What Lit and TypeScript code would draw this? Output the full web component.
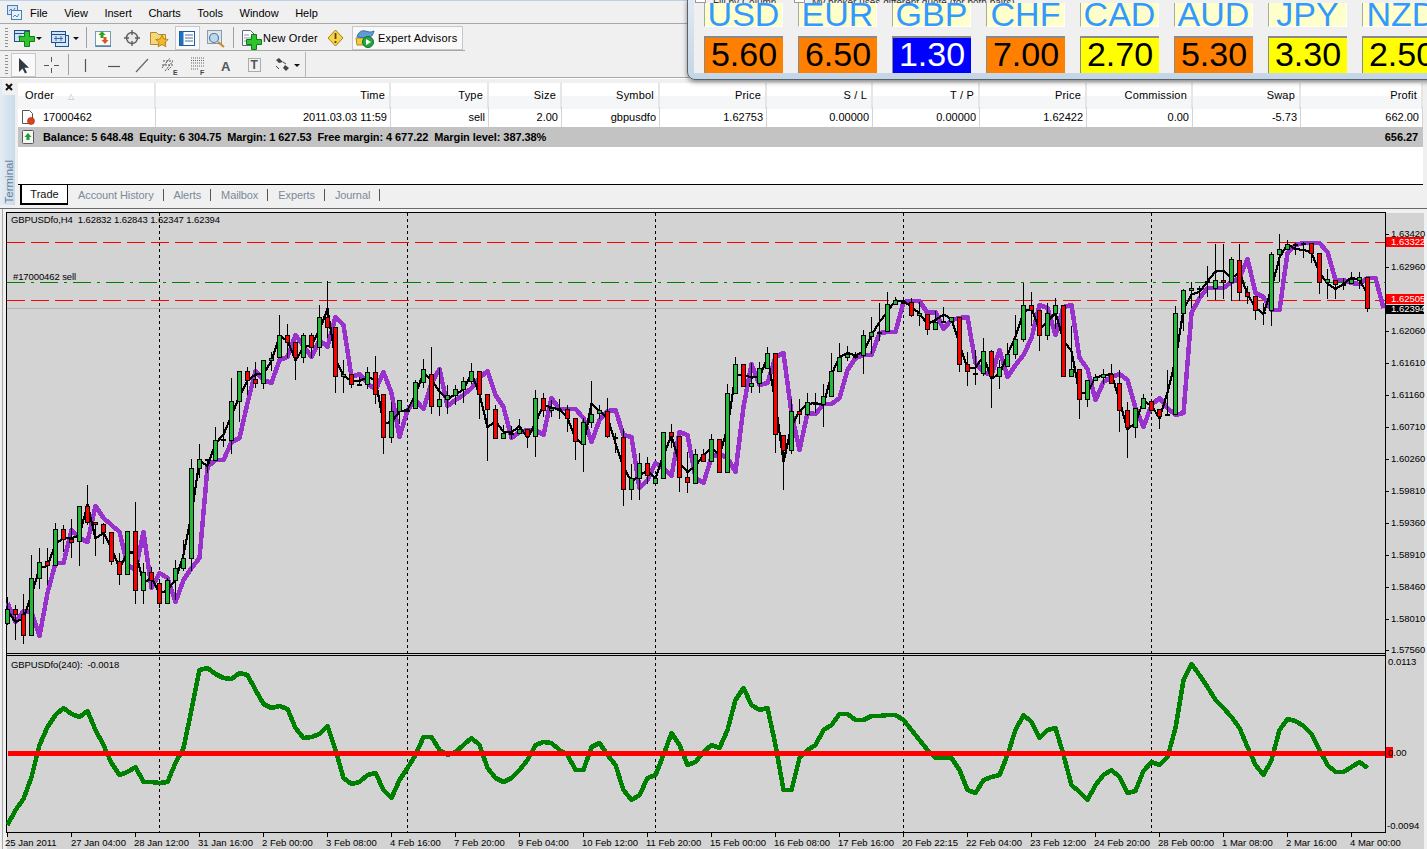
import { LitElement, css, html, svg } from 'lit'
import { customElement } from 'lit/decorators.js'

// [high, body top, body bottom, low, kind] in page pixels, one bar every 8px from x=7
type Bar = [number, number, number, number, 'g' | 'r' | 'd']
const BARS: Bar[] = [
  [597,609,623,624,'g'],[605,609,614,639,'r'],[594,614,635,643,'r'],[555,578,635,635,'g'],[548,562,578,588,'g'],
  [548,561,565,584,'r'],[523,529,565,565,'g'],[525,529,539,551,'r'],[519,539,542,557,'r'],[506,506,541,565,'g'],
  [485,506,522,524,'r'],[522,522,524,555,'r'],[523,524,532,543,'r'],[532,532,561,564,'r'],[553,561,574,584,'r'],
  [531,531,574,574,'g'],[502,531,590,603,'r'],[563,572,590,603,'g'],[567,572,580,588,'r'],[579,583,603,607,'r'],
  [578,580,603,603,'g'],[560,568,580,599,'g'],[540,558,568,570,'g'],[459,468,558,570,'g'],[444,459,468,477,'g'],
  [459,459,459,473,'d'],[427,440,460,460,'g'],[422,439,439,447,'d'],[378,401,440,453,'g'],[371,371,401,421,'g'],
  [367,371,380,394,'r'],[362,379,383,387,'r'],[360,360,383,388,'g'],[352,358,360,370,'g'],[315,335,357,357,'g'],
  [324,335,342,357,'r'],[342,342,357,379,'r'],[333,335,357,362,'g'],[333,335,347,357,'r'],[305,317,347,355,'g'],
  [281,317,327,337,'r'],[327,327,376,392,'r'],[360,374,376,392,'g'],[374,374,384,387,'r'],[377,384,384,385,'d'],
  [367,372,384,388,'g'],[356,372,394,403,'r'],[394,394,437,453,'r'],[402,411,437,442,'g'],[400,400,411,423,'g'],
  [408,410,410,412,'d'],[380,382,408,408,'g'],[359,369,382,387,'g'],[347,374,406,413,'r'],[368,399,406,415,'g'],
  [385,395,399,413,'g'],[385,389,395,404,'g'],[377,381,389,402,'g'],[363,371,381,383,'g'],[371,371,394,418,'r'],
  [394,394,409,460,'r'],[405,409,438,438,'r'],[425,433,438,438,'g'],[426,433,433,439,'d'],[419,429,433,433,'g'],
  [429,429,436,447,'r'],[390,398,436,456,'g'],[393,398,410,416,'r'],[400,408,410,416,'g'],[399,409,409,419,'d'],
  [405,409,418,431,'r'],[418,418,441,459,'r'],[418,422,444,471,'g'],[381,414,422,427,'g'],[405,410,413,418,'g'],
  [398,411,436,437,'r'],[433,437,437,453,'d'],[429,437,489,505,'r'],[464,478,489,499,'g'],[453,463,478,499,'g'],
  [457,463,475,483,'r'],[475,478,483,483,'g'],[432,432,478,478,'g'],[424,432,436,447,'r'],[436,436,477,491,'r'],
  [452,477,482,492,'r'],[449,454,483,483,'g'],[449,454,461,461,'r'],[434,439,461,461,'g'],[439,439,472,472,'r'],
  [384,393,472,472,'g'],[357,364,393,393,'g'],[364,364,386,386,'r'],[363,383,386,392,'g'],[362,368,383,392,'g'],
  [347,353,368,368,'g'],[353,353,434,452,'r'],[435,435,450,489,'r'],[399,411,450,453,'g'],[399,411,414,423,'r'],
  [393,402,414,415,'g'],[393,403,403,413,'d'],[384,396,404,426,'g'],[353,371,396,396,'g'],[343,357,371,371,'g'],
  [346,354,357,360,'g'],[352,356,356,359,'d'],[330,335,355,373,'g'],[317,332,336,353,'g'],[303,332,332,341,'d'],
  [292,304,331,331,'g'],[297,300,304,304,'g'],[298,302,302,304,'d'],[298,302,315,316,'r'],[302,313,315,325,'g'],
  [314,314,329,334,'r'],[311,322,329,329,'g'],[307,321,321,322,'d'],[317,317,321,321,'g'],[317,317,364,371,'r'],
  [352,364,371,385,'r'],[350,373,373,385,'d'],[338,351,373,375,'g'],[350,351,376,407,'r'],[360,367,376,388,'g'],
  [343,354,366,366,'g'],[315,339,354,358,'g'],[283,305,339,341,'g'],[292,305,310,325,'r'],[310,310,335,350,'r'],
  [303,313,335,339,'g'],[298,305,313,328,'g'],[305,305,376,376,'r'],[326,369,376,376,'g'],[369,369,399,418,'r'],
  [380,380,399,406,'g'],[374,377,380,380,'g'],[369,374,377,383,'g'],[364,374,383,383,'r'],[370,383,410,431,'r'],
  [402,410,427,457,'r'],[408,408,427,437,'g'],[394,398,408,408,'g'],[401,401,410,410,'r'],[409,409,416,428,'r'],
  [370,414,414,415,'d'],[306,313,414,414,'g'],[289,290,313,330,'g'],[282,288,290,307,'g'],[286,288,288,298,'d'],
  [266,281,281,297,'d'],[244,280,288,299,'g'],[244,280,282,298,'r'],[257,259,282,300,'g'],[244,260,292,300,'r'],
  [286,292,296,303,'r'],[296,296,310,319,'r'],[303,312,312,325,'d'],[252,254,310,325,'g'],[234,249,254,281,'g'],
  [240,244,249,249,'g'],[243,244,244,255,'d'],[242,243,243,258,'d'],[243,243,253,262,'r'],[253,253,282,293,'r'],
  [269,279,282,298,'g'],[280,280,284,298,'r'],[278,284,284,290,'d'],[272,279,283,283,'g'],[272,277,280,288,'g'],
  [277,277,308,311,'r'],
]

const PURPLE = [603,622,611,612,636,593,563,563,530,538,542,506,518,525,532,565,570,532,588,573,578,602,580,568,558,467,460,460,442,438,403,371,380,383,360,357,335,346,357,340,347,317,325,377,374,383,390,372,393,437,410,400,409,383,369,406,400,395,388,378,371,395,407,438,432,430,430,435,398,409,409,409,418,442,420,411,410,435,437,488,480,463,468,476,432,435,478,483,457,454,458,472,407,364,385,383,357,353,413,450,413,414,404,404,398,370,358,355,355,333,332,332,302,301,301,313,312,329,320,318,317,363,372,375,350,377,365,355,338,305,308,335,307,305,358,369,400,382,377,374,380,408,427,405,398,408,415,413,313,298,288,288,288,282,278,259,293,297,310,310,253,245,243,243,243,252,280,280,283,284,278,278,308]

const OSC = [825,810,799,777,745,727,715,708,714,717,711,730,745,763,775,772,767,782,782,783,782,763,748,710,670,668,674,678,679,673,675,690,704,708,706,709,728,738,737,734,726,750,778,784,782,775,773,790,798,780,
  768,755,737,737,750,755,752,745,738,745,768,778,782,778,770,760,745,742,743,750,755,770,770,747,743,755,765,790,800,795,778,775,755,733,745,765,762,752,745,748,730,700,688,705,710,708,745,790,790,758,750,745,730,725,714,714,720,720,716,716,715,715,720,730,740,750,758,758,758,770,790,793,780,777,775,755,730,715,722,738,730,728,755,785,792,800,785,775,770,777,793,791,771,762,765,757,728,680,664,675,687,700,708,717,728,747,765,775,760,730,719,721,726,734,750,765,772,772,767,762,768]

const barX = (i: number) => 7 + 8 * i
const line = (ys: number[]) => ys.map((y, i) => `${barX(i) + 0.5},${y}`).join(' ')

const PRICES: [string, number][] = [['1.63420',234],['1.62960',267],['1.62060',331],['1.61610',363],['1.61160',395],['1.60710',427],['1.60260',459],['1.59810',491],['1.59360',523],['1.58910',555],['1.58460',587],['1.58010',619],['1.57560',650]]

const TIMES = ['25 Jan 2011','27 Jan 04:00','28 Jan 12:00','31 Jan 16:00','2 Feb 00:00','3 Feb 08:00','4 Feb 16:00','7 Feb 20:00','9 Feb 04:00','10 Feb 12:00','11 Feb 20:00','15 Feb 00:00','16 Feb 08:00','17 Feb 16:00','20 Feb 22:15','22 Feb 04:00','23 Feb 12:00','24 Feb 20:00','28 Feb 00:00','1 Mar 08:00','2 Mar 16:00','4 Mar 00:00']

const CURRENCIES = [
  { name: 'USD', value: '5.60', tone: 'orange' },
  { name: 'EUR', value: '6.50', tone: 'orange' },
  { name: 'GBP', value: '1.30', tone: 'blue' },
  { name: 'CHF', value: '7.00', tone: 'orange' },
  { name: 'CAD', value: '2.70', tone: 'yellow' },
  { name: 'AUD', value: '5.30', tone: 'orange' },
  { name: 'JPY', value: '3.30', tone: 'yellow' },
  { name: 'NZD', value: '2.50', tone: 'yellow' },
]

const COLS: [string, string][] = [['Time','2011.03.03 11:59'],['Type','sell'],['Size','2.00'],['Symbol','gbpusdfo'],['Price','1.62753'],['S / L','0.00000'],['T / P','0.00000'],['Price','1.62422'],['Commission','0.00'],['Swap','-5.73'],['Profit','662.00']]

// icon cell drawn in page coordinates, so each glyph can be read off the screenshot
const cell = (x: number, w: number, y: number, h: number, body: unknown) =>
  html`<svg class="cell" width=${w} height=${h} viewBox="${x} ${y} ${w} ${h}">${body}</svg>`

const plus = (cx: number, cy: number) => svg`<path d="M${cx - 2.5} ${cy - 7.5}h5v5h5v5h-5v5h-5v-5h-5v-5h5z" fill="#2fc42f" stroke="#0f7a1a"/>`
const drop = (x: number, y: number) => svg`<path d="M${x} ${y}h6l-3 3z" fill="#111"/>`

const ROW1 = html`
  <span class="grip"></span>
  ${cell(10, 34, 26, 24, svg`<rect x="14.5" y="30.5" width="15" height="11" fill="#cfe2f6" stroke="#1d4f91"/><path d="M14 33.5h16" stroke="#1d4f91"/><path d="M18 37h7M20 35v4" stroke="#4a77b0"/>${plus(27, 39)}${drop(36, 37)}`)}
  ${cell(44, 38, 26, 24, svg`<rect x="55.5" y="35.5" width="13" height="11" fill="#dbe7f4" stroke="#23558f"/><rect x="51.5" y="31.5" width="14" height="11" fill="#cfe2f6" stroke="#1d4f91"/><path d="M51 34.5h15" stroke="#1d4f91"/><path d="M54 38.5h9M56 36v5M61 36v5" stroke="#3a6aa5"/>${drop(73, 37)}`)}
  <span class="sep"></span>
  ${cell(90, 27, 26, 24, svg`<rect x="95.5" y="31.5" width="15" height="15" fill="#fdfdf0" stroke="#6f9cc0"/><path d="M96 46h15" stroke="#4f7fa5" stroke-width="1.5"/><path d="M102 31l-3.5 4h2v3h3v-3h2z" fill="#26a626"/><path d="M105 44l3.500-4h-2v-3h-3v3h-2z" fill="#e2502a"/>`)}
  ${cell(117, 28, 26, 24, svg`<circle cx="132" cy="38" r="5.500" fill="#e9e9e9" stroke="#5e5e5e" stroke-width="1.400"/><path d="M132 30v5M132 41v5M124 38h5M135 38h5" stroke="#5e5e5e" stroke-width="1.400"/>`)}
  ${cell(145, 27, 26, 24, svg`<path d="M150.500 32.500h6l2 2h7v10h-15z" fill="#f5d77c" stroke="#b08a2a"/><path d="M162 35l1.900 4 4.300.500-3.200 3 .9 4.300-3.900-2.200-3.900 2.200.9-4.300-3.200-3 4.300-.5z" fill="#f2b92b" stroke="#a67a12" stroke-width=".8"/>`)}
  <span class="pressed small">${cell(175, 25, 26, 24, svg`<rect x="179.500" y="31.500" width="15" height="14" fill="#fff" stroke="#1e5aa5"/><rect x="180" y="32" width="3.500" height="13" fill="#1f6fc4"/><path d="M185 35h8M185 38h8M185 41h8" stroke="#4a6e9a"/>`)}</span>
  ${cell(201, 28, 26, 24, svg`<rect x="207.500" y="30.500" width="14" height="13" fill="#dbe5ee" stroke="#8b9aa8"/><circle cx="214" cy="38" r="4.500" fill="#bcd8f0" stroke="#5a7894" stroke-width="1.200"/><path d="M218 42l6 5" stroke="#c98a2a" stroke-width="2.200"/>`)}
  <span class="sep"></span>
  ${cell(237, 26, 26, 24, svg`<path d="M242.500 30.500h8l4 4v11h-12z" fill="#fff" stroke="#5c6b7a"/><path d="M244 35h5M244 38h8M244 41h6" stroke="#8a97a5"/>${plus(254, 42)}`)}
  <span class="label order">New Order</span>
  ${cell(323, 27, 26, 24, svg`<path d="M336.500 30l7.500 8-7.500 8-7.500-8z" fill="#f7d24a" stroke="#a88414"/><path d="M336.500 33v6" stroke="#5a4708" stroke-width="1.800"/><path d="M336.500 41v2" stroke="#5a4708" stroke-width="1.800"/>`)}
  <span class="pressed ea">
    ${cell(353, 26, 26, 24, svg`<path d="M357 38h14l1 7h-14z" fill="#f2cc3e" stroke="#a98a1e"/><path d="M358 37c1-5 5-7 8-6 3 .5 5 2 9 0-1 4-3 7-7 7z" fill="#5f9bd6" stroke="#336ea8"/><circle cx="369" cy="42" r="5.500" fill="#25a83a" stroke="#14712a"/><path d="M367 39l5 3-5 3z" fill="#fff"/>`)}
    <span class="label">Expert Advisors</span>
  </span>
`

const ROW2 = html`
  <span class="grip"></span>
  <span class="pressed arrow">${cell(11, 25, 53, 23, svg`<path d="M19 58v14l3.500-3.500 2.500 5 2-1-2.500-4.800h4.500z" fill="#2f3a44"/>`)}</span>
  ${cell(36, 28, 53, 23, svg`<path d="M51.500 57v5M51.500 68v5M44 65.500h5M54 65.500h5" stroke="#555"/>`)}
  <span class="sep"></span>
  ${cell(72, 28, 53, 23, svg`<path d="M85.500 59v13" stroke="#555" stroke-width="1.200"/>`)}
  ${cell(100, 28, 53, 23, svg`<path d="M108 66.500h12" stroke="#555" stroke-width="1.200"/>`)}
  ${cell(128, 28, 53, 23, svg`<path d="M136 72l12-13" stroke="#666" stroke-width="1.200"/>`)}
  ${cell(156, 28, 53, 23, svg`<path d="M162 68l8-10M165 71l8-10M168 70l3-3M162 65h12M163 61h10" stroke="#555" stroke-dasharray="2 1"/><text x="173" y="75" class="mini">E</text>`)}
  ${cell(184, 28, 53, 23, svg`<path d="M191 58h13M191 60.500h13M191 63h13M191 66h13M191 69h8" stroke="#666" stroke-dasharray="1 1"/><text x="200" y="75" class="mini">F</text>`)}
  ${cell(212, 28, 53, 23, svg`<text x="221" y="71" class="big">A</text>`)}
  ${cell(240, 28, 53, 23, svg`<rect x="248.500" y="58.500" width="12" height="13" fill="none" stroke="#666" stroke-dasharray="1 1"/><text x="250.500" y="69" class="big sm">T</text>`)}
  ${cell(268, 34, 53, 23, svg`<path d="M279 58l4 4-4 1-3-3z" fill="#444"/><path d="M285 65l4 3-3 3-3-3z" fill="#444"/><path d="M276 66l3 3M283 62l3 2" stroke="#444"/>${drop(294, 64)}`)}
  <span class="sep last"></span>
`

const CHART = svg`
  <rect x="0" y="205" width="1427" height="644" fill="#f0f0f0"/>
  <path d="M0 208.500h1427" stroke="#6a6a6a"/>
  <path d="M2.500 209v640" stroke="#a9a9a9"/>
  <rect x="7" y="213" width="1417" height="636" fill="#d3d3d3"/>
  <g shape-rendering="crispEdges">
    <path d="M6.500 212v621M1385.500 212v621M6 212.500h1380M6 653.500h1380M6 655.500h1380M6 832.500h1380" stroke="#000" fill="none"/>
    <path d="M7 308.500h1378" stroke="#b4b4b4"/>
    <path d="M7 282.500h1378" stroke="#008000" stroke-dasharray="18 6 3 6"/>
    <path d="M7 242.500h1378M7 300.500h1378" stroke="#f00" stroke-dasharray="18 6"/>
    ${[159, 407, 655, 903, 1151].map(x => svg`<path d="M${x + 0.5} 213v620" stroke="#000" stroke-dasharray="3 3"/>`)}
    <polyline points=${line(PURPLE)} fill="none" stroke="#9932cc" stroke-width="4.500" stroke-linejoin="round"/>
    <polyline points=${line(BARS.map(b => (b[0] + b[3]) / 2))} fill="none" stroke="#000" stroke-width="2.200"/>
    ${BARS.map((b, i) => {
      const x = barX(i)
      const [h, t, bt, l, k] = b
      if (k === 'd') return svg`<rect x=${x} y=${h} width="1" height=${l - h} fill="#000"/><rect x=${x - 2} y=${t} width="5" height="2" fill="#000"/>`
      return svg`<rect x=${x} y=${h} width="1" height=${l - h + 1} fill="#000"/><rect x=${x - 2} y=${t} width="5" height=${bt - t + 1} fill="#000"/><rect x=${x - 1} y=${t + 1} width="3" height=${Math.max(bt - t - 1, 1)} fill=${k === 'g' ? '#22b83a' : '#f00'}/>`
    })}
    <polyline points=${line(OSC)} fill="none" stroke="#008000" stroke-width="4.500" stroke-linejoin="round"/>
    <rect x="8" y="751" width="1377" height="5" fill="#f00"/>
    ${PRICES.map(p => svg`<path d="M1385 ${p[1] + 0.5}h4" stroke="#000"/>`)}
    ${TIMES.map((_, i) => svg`<path d="M${7.5 + 64 * i} 833v4" stroke="#000"/>`)}
  </g>
  <g class="axis">
    <text class="tight" x="11" y="223">GBPUSDfo,H4  1.62832 1.62843 1.62347 1.62394</text>
    <text class="tight" x="13" y="280">#17000462 sell</text>
    <text class="tight" x="11" y="668">GBPUSDfo(240):  -0.0018</text>
    ${PRICES.map(p => svg`<text x="1391" y=${p[1] + 3}>${p[0]}</text>`)}
    <rect x="1386" y="305" width="38" height="9" fill="#000"/>
    <text x="1391" y="312" fill="#fff">1.62394</text>
    <rect x="1386" y="294" width="38" height="10" fill="#f00"/>
    <text x="1391" y="302" fill="#fff">1.62505</text>
    <rect x="1386" y="237" width="38" height="10" fill="#f00"/>
    <text x="1391" y="245" fill="#fff">1.63322</text>
    <text x="1388" y="665">0.0113</text>
    <rect x="1386" y="747" width="7" height="11" fill="#f00"/>
    <text x="1388" y="756">0.00</text>
    <text x="1387" y="829">-0.0094</text>
    ${TIMES.map((t, i) => svg`<text x=${i === 0 ? 5 : 7 + 64 * i - (i < 2 ? 0 : 1)} y="846">${t}</text>`)}
  </g>
`

@customElement('app-root')
export class AppRoot extends LitElement {
  static styles = css`
    :host {
      display: block;
      position: relative;
      width: 1427px;
      height: 849px;
      overflow: hidden;
      background: #f0f0f0;
      font: 11px 'Liberation Sans', Arial, sans-serif;
      color: #000;
    }
    .menu {
      height: 24px;
      box-sizing: border-box;
      display: flex;
      align-items: center;
      gap: 16.500px;
      padding: 2px 0 0 7px;
      border-top: 1px solid #b9d1ea;
      border-bottom: 1px solid #a8a8a8;
    }
    .menu svg { margin-right: -12.500px; margin-top: -2px; }
    .row {
      height: 27px;
      box-sizing: border-box;
      padding-top: 1px;
      display: flex;
      align-items: center;
      border-bottom: 1px solid #a8a8a8;
    }
    .row.one { width: 465px; }
    .row.full { width: 100%; }
    .rows { border-bottom: 1px solid #fff; }
    .cell { display: block; flex: none; }
    .grip {
      width: 3px;
      height: 20px;
      margin: 0 2px 0 5px;
      background: repeating-linear-gradient(to bottom, #8f8f8f 0 1px, transparent 1px 3px);
      flex: none;
    }
    .sep {
      flex: none;
      width: 1px;
      height: 21px;
      background: #a0a0a0;
      margin: 0 3px 0 4px;
    }
    .sep.last { margin-left: 3px; background: #b5b5b5; height: 26px; }
    .pressed {
      display: inline-flex;
      align-items: center;
      height: 24px;
      background: #f9f9f9;
      outline: 1px solid #c8c8c8;
      outline-offset: -1px;
      flex: none;
    }
    .pressed.ea { margin-left: 3px; width: 111px; }
    .pressed.small { margin: 0 1px 0 3px; }
    .pressed.arrow { margin-left: 1px; }
    .label { letter-spacing: 0.2px; white-space: nowrap; }
    .order { width: 59px; flex: none; }
    .mini { font: bold 7px 'Liberation Sans', sans-serif; fill: #444; }
    .big { font: bold 13px 'Liberation Sans', sans-serif; fill: #555; }
    .big.sm { font-size: 12px; }

    .terminal {
      height: 126px;
      display: flex;
    }
    .strip {
      width: 15px;
      margin: 0 3px 0 0;
      padding-left: 2px;
      box-sizing: border-box;
      display: flex;
      flex-direction: column;
      justify-content: space-between;
      align-items: center;
      background: linear-gradient(to right, #e4edf5, #c9dbea);
    }
    .close {
      width: 100%;
      height: 16px;
      background: #f0f0f0;
      display: flex;
      align-items: center;
      justify-content: center;
    }
    .vert {
      writing-mode: vertical-rl;
      transform: rotate(180deg);
      color: #667f97;
      font-size: 11.500px;
      margin-bottom: 2px;
    }
    .body {
      flex: 1;
      min-width: 0;
      display: flex;
      flex-direction: column;
      margin-right: 4px;
    }
    .table {
      flex: 1;
      margin-top: 4px;
      background: #fff;
    }
    .grid {
      display: grid;
      grid-template-columns: 138px 235px 98px 73px 98px 107px 106px 107px 107px 106px 108px 122px;
    }
    .head { height: 22px; border-bottom: 2px solid #e4e4e4; }
    .head > div {
      background: linear-gradient(to bottom, #fff 0 50%, #f5f6f7 50%);
      border-right: 2px solid #e6e6e6;
      padding-right: 4px;
      line-height: 24px;
      text-align: right;
      letter-spacing: 0.2px;
    }
    .head > .first { text-align: left; padding-left: 7px; }
    .tri { color: #bbb; margin-left: 14px; font-size: 8px; }
    .data { height: 20px; }
    .data > div {
      border-right: 1px solid #d4d4d4;
      padding-right: 3px;
      line-height: 20px;
      text-align: right;
    }
    .data > .first { display: flex; align-items: center; gap: 8px; text-align: left; padding-left: 3px; }
    .sum {
      height: 20px;
      display: flex;
      align-items: center;
      background: #c3c3c3;
      font-weight: bold;
      padding: 0 5px 0 4px;
      letter-spacing: -0.08px;
    }
    .sum svg { margin-right: 9px; }
    .sum .total { margin-left: auto; }
    .tabs {
      height: 20px;
      display: flex;
      align-items: center;
      border-top: 1px solid #000;
      padding-left: 2px;
      color: #7a8a99;
    }
    .tabs .on {
      width: 48px;
      height: 20px;
      margin-top: -1px;
      box-sizing: border-box;
      background: #fff;
      color: #111;
      border: solid #000;
      border-width: 0 1px 2px 2px;
      line-height: 19px;
      text-align: center;
    }
    .tabs .tab { padding: 0 9px 0 10px; border-right: 1px solid #555; line-height: 12px; letter-spacing: -0.1px; }

    .chart { display: block; }
    .axis text { font: 9.500px 'Liberation Sans', sans-serif; white-space: pre; }
    .axis .tight { letter-spacing: -0.1px; }

    .float {
      position: absolute;
      left: 687px;
      top: -1px;
      right: -4px;
      height: 81px;
      box-sizing: border-box;
      padding: 0 0 6px 6px;
      border: 1px solid #56626e;
      border-radius: 0 0 0 8px;
      background: linear-gradient(to bottom, #dfe9f3, #c4d6e6);
      box-shadow: 0 2px 5px rgba(0, 0, 0, 0.45);
    }
    .pane {
      position: relative;
      height: 100%;
      overflow: hidden;
      background: #f0f0f0;
      padding-left: 10px;
    }
    .checks {
      position: absolute;
      left: 0;
      right: 0;
      top: 0;
      height: 3px;
      overflow: hidden;
      background: #f0f0f0;
      z-index: 1;
      display: flex;
      gap: 7px;
      padding-left: 1px;
      font-size: 10px;
      line-height: 6px;
      color: #333;
    }
    .checks i {
      width: 11px;
      height: 3px;
      background: #fff;
      border: solid #999;
      border-width: 0 1px 1px;
      box-sizing: border-box;
      flex: none;
    }
    .checks span { width: 74px; flex: none; white-space: nowrap; }
    .checks span:last-child { width: auto; }
    .cur {
      display: flex;
      gap: 15px;
      font: 34px 'Liberation Sans', Arial, sans-serif;
      margin-top: -4px;
    }
    .col { width: 79px; flex: none; }
    .name {
      height: 31px;
      overflow: hidden;
      box-sizing: border-box;
      background: #ffffcc;
      color: #3399ff;
      line-height: 36px;
      text-align: center;
      border-left: 1px solid #a8a8a8;
      border-bottom: 1px solid #fff;
      border-right: 1px solid #fff;
      margin-bottom: 9px;
    }
    .val {
      height: 37px;
      box-sizing: border-box;
      line-height: 32px;
      text-align: center;
      border-top: 2px solid #8a8a8a;
      border-left: 1px solid #8a8a8a;
      color: #000;
    }
    .orange { background: #ff8000; }
    .yellow { background: #ffff00; }
    .blue { background: #0000ff; color: #fff; }
  `

  render() {
    return html`
      <div class="menu">
        ${cell(7, 19, 2, 20, svg`<rect x="7.500" y="5.500" width="10" height="9" fill="#d7e6f6" stroke="#4a7fb5"/><rect x="11.500" y="10.500" width="10" height="9" fill="#e9f1fa" stroke="#4a7fb5"/><path d="M9 11l2-2 2 2 2-3M13 17l2-2 2 2 2-3" stroke="#5a86b5" fill="none"/>`)}
        <span>File</span><span>View</span><span>Insert</span><span>Charts</span><span>Tools</span><span>Window</span><span>Help</span>
      </div>
      <div class="rows">
        <div class="row one">${ROW1}</div>
        <div class="row full">${ROW2}</div>
      </div>
      <div class="terminal">
        <div class="strip">
          <div class="close"><svg width="8" height="8" viewBox="0 0 8 8"><path d="M1 1l6 6M7 1l-6 6" stroke="#111" stroke-width="2"/></svg></div>
          <div class="vert">Terminal</div>
        </div>
        <div class="body">
          <div class="table">
            <div class="grid head">
              <div class="first">Order<span class="tri">△</span></div>
              ${COLS.map(c => html`<div>${c[0]}</div>`)}
            </div>
            <div class="grid data">
              <div class="first">
                <svg width="14" height="15" viewBox="0 0 14 15"><path d="M1.500.500h7l3 3v10h-10z" fill="#fff" stroke="#555"/><circle cx="10" cy="11" r="3.500" fill="#e2401a" stroke="#9a2a10" stroke-width=".6"/></svg>
                17000462
              </div>
              ${COLS.map(c => html`<div>${c[1]}</div>`)}
            </div>
            <div class="sum">
              <svg width="12" height="14" viewBox="0 0 12 14"><rect x=".5" y=".5" width="11" height="13" rx="1" fill="#f6f6f6" stroke="#5a5a5a"/><path d="M6 3l3.500 4h-2v3h-3v-3h-2z" fill="#1f9c2e"/></svg>
              <span>Balance: 5 648.48&nbsp; Equity: 6 304.75&nbsp; Margin: 1 627.53&nbsp; Free margin: 4 677.22&nbsp; Margin level: 387.38%</span>
              <span class="total">656.27</span>
            </div>
          </div>
          <div class="tabs">
            <span class="on">Trade</span>
            <span class="tab">Account History</span><span class="tab">Alerts</span><span class="tab">Mailbox</span><span class="tab">Experts</span><span class="tab">Journal</span>
          </div>
        </div>
      </div>
      <svg class="chart" width="1427" height="644" viewBox="0 205 1427 644">${CHART}</svg>
      <div class="float">
        <div class="pane">
          <div class="checks"><i></i><span>Fill by Column</span><i></i><span>My broker uses different quote (for both pairs)</span></div>
          <div class="cur">
            ${CURRENCIES.map(c => html`
              <div class="col">
                <div class="name">${c.name}</div>
                <div class="val ${c.tone}">${c.value}</div>
              </div>`)}
          </div>
        </div>
      </div>
    `
  }
}
